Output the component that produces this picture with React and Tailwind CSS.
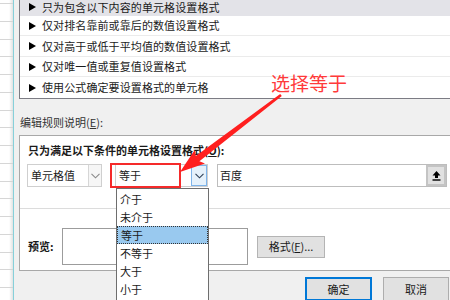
import React from "react";

const F = { fontFamily: '"Noto Sans CJK SC", "Noto Sans", sans-serif' };

function Tri() {
  return (
    <svg width="7" height="8" viewBox="0 0 7 8" className="shrink-0">
      <polygon points="0,0 7,4 0,8" fill="#000" />
    </svg>
  );
}

function Chevron({ color = "#555" }) {
  return (
    <svg width="9" height="6" viewBox="0 0 9 6">
      <polyline points="0.5,0.8 4.5,4.8 8.5,0.8" fill="none" stroke={color} strokeWidth="1.1" />
    </svg>
  );
}

const rules = [
  { t: "只为包含以下内容的单元格设置格式", h: "h-[19px]", sel: true },
  { t: "仅对排名靠前或靠后的数值设置格式", h: "h-[20px]" },
  { t: "仅对高于或低于平均值的数值设置格式", h: "h-[21px]" },
  { t: "仅对唯一值或重复值设置格式", h: "h-[20px]" },
  { t: "使用公式确定要设置格式的单元格", h: "h-[21px]", last: true },
];

const opts = ["介于", "未介于", "等于", "不等于", "大于", "小于"];

export default function App() {
  return (
    <div
      className="relative w-[450px] h-[300px] overflow-hidden flex bg-[#f0f0f0] text-[11px] text-[#1a1a1a]"
      style={F}
    >
      {/* spreadsheet strip */}
      <div className="w-[13px] h-full flex flex-col pt-[3px] bg-gradient-to-r from-white from-70% to-[#e2e2e2]">
        {Array.from({ length: 18 }).map((_, i) => (
          <div key={i} className="h-[17.75px] shrink-0 border-t border-[#d6d6d6]" />
        ))}
      </div>
      <div className="w-[1px] h-full bg-[#86d0da]" />

      {/* dialog */}
      <div className="flex-1 flex flex-col pl-[5px]">
        {/* rule type list */}
        <div className="mt-[-3px] bg-white border-l border-b border-[#7c7c84] flex flex-col">
          {rules.map((r, i) => (
            <div
              key={i}
              className={`${r.h} flex items-center pl-[9px] gap-[6px] ${r.sel ? "bg-[#e3e3e8] pt-[1px]" : ""} ${
                !r.last && !r.sel ? "border-b border-[#ebebeb]" : ""
              }`}
            >
              <Tri />
              <span className="leading-none tracking-[0.1px]">{r.t}</span>
            </div>
          ))}
        </div>

        {/* edit description label */}
        <div className="mt-[16px] h-[14px] leading-[14px] pl-[1px] text-[#333]">
          编辑规则说明(<span className="underline">E</span>):
        </div>

        {/* group box */}
        <div className="mt-[6px] bg-white border-l border-t border-b border-[#a8a8a8] flex flex-col">
          <div className="border-b border-[#dcdcdc] pb-[21px]">
            <div className="pt-[7px] pl-[8px] h-[21px] leading-[14px] font-bold">
              只为满足以下条件的单元格设置格式(<span className="underline">O</span>):
            </div>
            <div className="mt-[7px] pl-[7px] flex h-[23px]">
              {/* combo 1 */}
              <div className="w-[75px] h-full flex border border-[#cfcfcf] bg-white">
                <div className="flex-1 flex items-center pl-[3px]">单元格值</div>
                <div className="w-[13px] flex items-center justify-center border-l border-[#d6d6d6] bg-[#f6f6f6]">
                  <Chevron color="#8a8a8a" />
                </div>
              </div>
              {/* combo 2 */}
              <div className="ml-[13px] w-[93px] h-full flex border border-[#cfcfcf] bg-white">
                <div className="flex-1 flex items-center pl-[3px]">等于</div>
                <div className="w-[16px] flex items-center justify-center border border-[#7eb4ea] bg-[#e5f1fb]">
                  <Chevron color="#2c3e55" />
                </div>
              </div>
              {/* value box */}
              <div className="ml-[9px] w-[230px] h-full flex border border-[#bdbdbd] bg-white">
                <div className="flex-1 flex items-center pl-[2px]">百度</div>
                <div className="w-[20px] h-full flex items-center justify-center bg-[#e1e1e1] border-2 border-[#c4c4c4]">
                  <svg width="9" height="10" viewBox="0 0 9 10">
                    <polygon points="4.5,0 8.5,4.5 6,4.5 6,7 3,7 3,4.5 0.5,4.5" fill="#000" />
                    <rect x="0.5" y="8.3" width="8" height="1.4" fill="#000" />
                  </svg>
                </div>
              </div>
            </div>
          </div>

          {/* preview */}
          <div className="pt-[19px] pb-[5px] pl-[8px] flex items-center">
            <div className="w-[34px] font-bold">预览:</div>
            <div className="w-[186px] h-[37px] border border-[#9c9c9c] bg-white" />
            <div className="ml-[9px] w-[68px] h-[22px] flex items-center justify-center bg-[#e1e1e1] border border-[#b4b4b4]">
              格式(<span className="underline">F</span>)...
            </div>
          </div>
        </div>

        {/* buttons */}
        <div className="mt-[6px] flex pl-[286px] gap-[11px]">
          <div className="w-[67px] h-[24px] flex items-center justify-center bg-[#e1e1e1] border-2 border-[#0078d7]">
            确定
          </div>
          <div className="w-[66px] h-[24px] flex items-center justify-center bg-[#e1e1e1] border border-[#adadad]">
            取消
          </div>
        </div>
      </div>

      {/* dropdown list overlay */}
      <div className="absolute left-[116px] top-[188px] w-[93px] h-[120px] bg-white border border-[#6e6e6e] pt-[1px] flex flex-col">
        {opts.map((o) => (
          <div
            key={o}
            className={`h-[18px] shrink-0 flex items-center pl-[3px] ${
              o === "等于" ? "bg-[#99c9ef] border border-dotted border-[#333] pl-[2px]" : ""
            }`}
          >
            {o}
          </div>
        ))}
      </div>

      {/* annotation: red box */}
      <div className="absolute left-[110px] top-[163px] w-[71px] h-[25px] border-2 border-[#f52a2a]" />

      {/* annotation text */}
      <div className="absolute left-[271px] top-[72px] text-[19px] leading-[22px] text-[#ff3a3a]" style={F}>
        选择等于
      </div>

      {/* annotation arrow */}
      <svg className="absolute left-0 top-0" width="450" height="300" viewBox="0 0 450 300">
        <polygon
          points="281.8,96.0 199.4,161.2 205.0,163.6 180,172 194.7,150.1 195.8,156.1 280.2,94.0"
          fill="#ff1f1f"
        />
      </svg>
    </div>
  );
}
